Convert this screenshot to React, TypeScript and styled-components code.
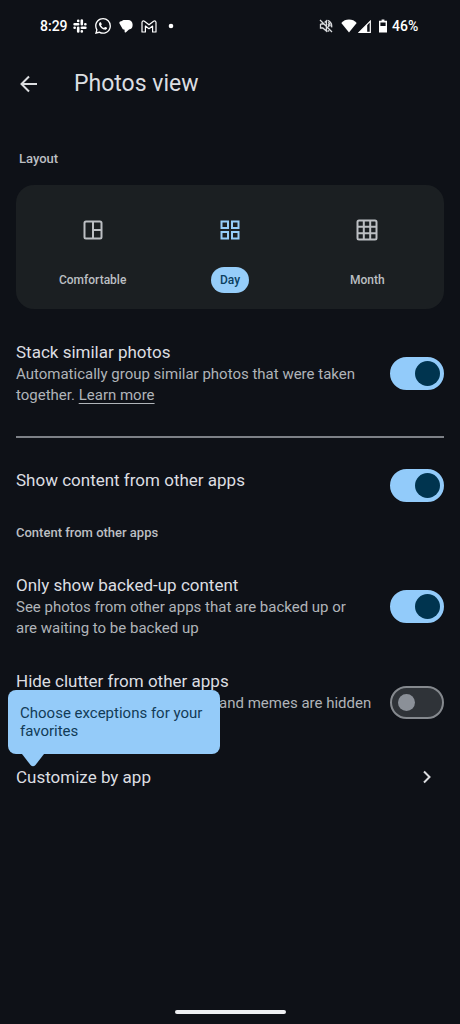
import React, { useState } from "react";
import styled, { createGlobalStyle } from "styled-components";

const GlobalStyle = createGlobalStyle`
  * { box-sizing: border-box; }
  body { margin: 0; background: #0e1117; }
  button, input { font: inherit; margin: 0; }
`;

const Screen = styled.div`
  min-height: 100vh;
  display: flex;
  flex-direction: column;
  background: #0e1117;
  color: #dcdee1;
  font-family: Roboto, "Liberation Sans", sans-serif;
`;

const StatusBar = styled.header`
  display: flex;
  align-items: center;
  justify-content: space-between;
  height: 52px;
  padding: 0 40px;
  font-size: 14px;
  font-weight: 500;
  color: #ffffff;
  svg { display: block; flex: none; }
`;

const StatusGroup = styled.div<{ $gap: number }>`
  display: flex;
  align-items: center;
  gap: ${(p) => p.$gap}px;
`;

const BatteryLevel = styled.span`
  min-width: 28px;
`;

const TopBar = styled.div`
  display: flex;
  align-items: center;
  gap: 32px;
  height: 64px;
  padding: 0 16px;
`;

const BackButton = styled.button`
  display: flex;
  width: 26px;
  height: 26px;
  padding: 0;
  border: 0;
  background: none;
  color: inherit;
`;

const PageTitle = styled.h1`
  margin: 0;
  font-size: 23px;
  line-height: 32px;
  font-weight: 400;
`;

const Content = styled.main`
  flex: 1;
  padding: 32px 16px 0;
`;

const SectionLabel = styled.h2<{ $inset?: boolean }>`
  margin: 0;
  padding: ${(p) => (p.$inset ? "2px 3px 17px" : "6px 0 16px")};
  font-size: 13px;
  line-height: 18px;
  font-weight: 500;
  color: #bcbfc3;
`;

const LayoutCard = styled.div`
  display: grid;
  grid-template-columns: 1fr 1fr 1fr;
  height: 124px;
  margin-bottom: 16px;
  padding: 0 8px;
  border-radius: 18px;
  background: #1b1f22;
  overflow: hidden;
`;

const LayoutOption = styled.button<{ $active: boolean }>`
  display: flex;
  flex-direction: column;
  align-items: center;
  gap: 24px;
  padding: 32px 0 0;
  border: 0;
  background: none;
  color: ${(p) => (p.$active ? "#96cdf9" : "#bcbfc3")};
`;

const OptionLabel = styled.span<{ $active: boolean }>`
  padding: 4px 9px;
  border-radius: 13px;
  font-size: 12px;
  line-height: 18px;
  font-weight: 500;
  background: ${(p) => (p.$active ? "#96cdf9" : "transparent")};
  color: ${(p) => (p.$active ? "#0b3f5f" : "#bcbfc3")};
`;

const Row = styled.div<{ $tall?: boolean; $top?: boolean }>`
  position: relative;
  display: flex;
  align-items: ${(p) => (p.$top ? "flex-start" : "center")};
  justify-content: space-between;
  gap: 16px;
  padding: ${(p) => (p.$tall ? "16px 0 15px" : "16px 0")};
`;

const RowCopy = styled.div<{ $tall?: boolean }>`
  flex: 1;
  min-height: ${(p) => (p.$tall ? "65px" : "22px")};
`;

const RowTitle = styled.label`
  display: block;
  font-size: 17px;
  line-height: 22px;
`;

const RowText = styled.p`
  margin: 1px 0 0;
  font-size: 15px;
  line-height: 21px;
  color: #b0b4b9;
`;

const TextLink = styled.a`
  color: inherit;
  text-decoration: underline;
  text-underline-offset: 3px;
`;

const Switch = styled.input`
  appearance: none;
  flex: none;
  display: flex;
  align-items: center;
  width: 54px;
  height: 33px;
  padding: 0 6px;
  border: 2px solid #85898e;
  border-radius: 17px;
  background: #2f3338;
  &::before {
    content: "";
    width: 17px;
    height: 17px;
    border-radius: 50%;
    background: #8b9098;
  }
  &:checked {
    justify-content: flex-end;
    padding: 0 2px;
    border-color: #92cbfa;
    background: #92cbfa;
  }
  &:checked::before {
    width: 25px;
    height: 25px;
    background: #00344f;
  }
`;

const Divider = styled.hr`
  height: 2px;
  margin: 15px 0;
  border: 0;
  background: #7d8187;
`;

const RowButton = styled.button`
  flex: 1;
  display: flex;
  align-items: center;
  justify-content: space-between;
  padding: 0 8px 0 0;
  border: 0;
  background: none;
  color: inherit;
  font-size: 17px;
  line-height: 22px;
  text-align: left;
`;

const Tooltip = styled.div`
  position: absolute;
  left: -8px;
  bottom: 50px;
  width: 212px;
  padding: 14px 12px;
  border-radius: 8px;
  background: #94cbf9;
  color: #123b57;
  font-size: 15px;
  line-height: 18px;
  svg {
    position: absolute;
    left: 14px;
    top: 100%;
  }
`;

const HomeBar = styled.footer`
  display: flex;
  justify-content: center;
  padding-bottom: 10px;
`;

const HomeHandle = styled.div`
  width: 111px;
  height: 4px;
  border-radius: 2px;
  background: #eef0f3;
`;

const SlackIcon = () => (
  <svg width="14" height="14" viewBox="0 0 14 14" fill="none" stroke="#fff" strokeWidth="2.6" strokeLinecap="round">
    <path d="M5.2 1.7v.2M5.2 5.2H1.6M8.8 1.6v3.6M12.3 5.2h.1M8.8 8.8h3.6M8.8 12.3v.1M5.2 8.8v3.6M1.7 8.8h-.1" />
  </svg>
);

const WhatsAppIcon = () => (
  <svg width="16" height="16" viewBox="0 0 24 24" fill="#fff">
    <path d="M17.47 14.38c-.3-.15-1.76-.87-2.03-.97-.27-.1-.47-.15-.67.15-.2.3-.77.97-.94 1.16-.17.2-.35.22-.64.08-.3-.15-1.26-.46-2.39-1.48-.88-.79-1.48-1.76-1.65-2.06-.17-.3-.02-.46.13-.6.13-.14.3-.35.45-.53.15-.17.2-.3.3-.5.1-.2.05-.37-.03-.52-.07-.15-.67-1.61-.91-2.2-.24-.58-.49-.5-.67-.51h-.57c-.2 0-.52.07-.79.37-.27.3-1.04 1.02-1.04 2.48s1.06 2.87 1.21 3.07c.15.2 2.1 3.2 5.08 4.49.7.3 1.26.49 1.69.62.71.23 1.36.2 1.87.12.57-.08 1.76-.72 2-1.41.25-.7.25-1.29.18-1.41-.07-.13-.27-.2-.57-.35M12.05 21.78a9.87 9.87 0 0 1-5.03-1.38l-.36-.21-3.74.98 1-3.65-.24-.37a9.86 9.86 0 0 1-1.51-5.26c0-5.45 4.44-9.88 9.89-9.88a9.82 9.82 0 0 1 6.99 2.9 9.82 9.82 0 0 1 2.89 6.99c0 5.45-4.44 9.88-9.89 9.88M20.46 3.49A11.8 11.8 0 0 0 12.05 0C5.5 0 .16 5.34.16 11.89c0 2.1.55 4.14 1.59 5.95L.06 24l6.3-1.65a11.9 11.9 0 0 0 5.69 1.45c6.55 0 11.89-5.34 11.89-11.89a11.82 11.82 0 0 0-3.48-8.42" />
  </svg>
);

const MessagesIcon = () => (
  <svg width="14" height="14" viewBox="0 0 14 14" fill="#fff">
    <path d="M4.8 1h4.4A4.400 4.400 0 0 1 13.600 5.400v.8A4.600 4.600 0 0 1 10 10.600L7 13.200Q5.600 14 5.600 12.400V10.800A3.400 3.400 0 0 1 2.800 8.400L.5 4.600Q-.2 2.600 2 2.200L3 2Q3.800 1 4.800 1Z" />
  </svg>
);

const MailIcon = () => (
  <svg width="16" height="13" viewBox="0 0 16 13" fill="none" stroke="#fff" strokeWidth="1.2" strokeLinejoin="round">
    <path d="M1 2.400Q1.400.3 3.400 1.200L8 4.800l4.600-3.600Q14.600.3 15 2.400V12h-3.400V6L8 8.700 4.400 6v6H1Z" />
  </svg>
);

const MutedIcon = () => (
  <svg width="14" height="14" viewBox="0 0 14 14" fill="none" stroke="#d9dbde" strokeWidth="1.3">
    <path d="M1 1l12 12M1.500 5v4h2.300L7.400 12V2L5.600 3.600M1.500 5h3.200M9 5q1.200 1.800.4 3M8.600 1.400q4.800 1.800 4 7M9.200 3.400q2.200 1.200 1.800 4M8.400 12.400l1.800-.8" />
  </svg>
);

const WifiIcon = () => (
  <svg width="16" height="14" viewBox="0 0 16 14" fill="#fff">
    <path d="M8 13.600.3 4Q3.400.6 8 .6T15.700 4Z" />
  </svg>
);

const SignalIcon = () => (
  <svg width="13" height="13" viewBox="0 0 13 13">
    <path d="M12.300 1.200V12.300H1.400Z" fill="none" stroke="#fff" strokeWidth="1.200" />
    <path d="M1 12.600 9.200 4.200V12.600Z" fill="#fff" />
  </svg>
);

const BatteryIcon = () => (
  <svg width="8" height="14" viewBox="0 0 8 14">
    <path d="M2.600.4h2.800v1.400H8V13.600H0V1.800h2.600ZM1.400 3.400V7h5.200V3.400Z" fill="#fff" fillRule="evenodd" />
  </svg>
);

const BackArrow = () => (
  <svg width="26" height="26" viewBox="0 0 26 26" fill="none" stroke="currentColor" strokeWidth="2">
    <path d="M21 13H6M13 5.500 5.500 13l7.500 7.500" />
  </svg>
);

const MosaicIcon = () => (
  <svg width="26" height="26" viewBox="0 0 26 26" fill="none" stroke="currentColor" strokeWidth="2">
    <rect x="4.500" y="4.500" width="17" height="17" rx="1.500" />
    <path d="M13 4.500v17M13 13h8.500" />
  </svg>
);

const FourGridIcon = () => (
  <svg width="26" height="26" viewBox="0 0 26 26" fill="none" stroke="currentColor" strokeWidth="2">
    <path d="M4.500 4.500h6.500v6.500h-6.500ZM15 4.500h6.500v6.500H15ZM4.500 15h6.500v6.500h-6.500ZM15 15h6.500v6.500H15Z" />
  </svg>
);

const NineGridIcon = () => (
  <svg width="26" height="26" viewBox="0 0 26 26" fill="none" stroke="currentColor" strokeWidth="2">
    <rect x="3.500" y="3.500" width="19" height="19" rx="1.500" />
    <path d="M9.800 3.500v19M16.200 3.500v19M3.500 9.800h19M3.500 16.200h19" />
  </svg>
);

const Chevron = () => (
  <svg width="18" height="18" viewBox="0 0 18 18" fill="none" stroke="currentColor" strokeWidth="2">
    <path d="m6 3.500 5.500 5.500L6 14.500" />
  </svg>
);

const layouts = [
  { name: "Comfortable", Icon: MosaicIcon },
  { name: "Day", Icon: FourGridIcon },
  { name: "Month", Icon: NineGridIcon },
];

interface SettingProps {
  id: string;
  title: string;
  on?: boolean;
  children?: React.ReactNode;
}

const Setting = ({ id, title, on = false, children }: SettingProps) => (
  <Row $top={!children} $tall={!!children}>
    <RowCopy $tall={!!children}>
      <RowTitle htmlFor={id}>{title}</RowTitle>
      {children && <RowText>{children}</RowText>}
    </RowCopy>
    <Switch id={id} type="checkbox" role="switch" defaultChecked={on} />
  </Row>
);

export default function App() {
  const [layout, setLayout] = useState("Day");
  return (
    <Screen>
      <GlobalStyle />
      <StatusBar>
        <StatusGroup $gap={8}>
          <StatusGroup $gap={5}>
            <span>8:29</span>
            <SlackIcon />
          </StatusGroup>
          <WhatsAppIcon />
          <MessagesIcon />
          <MailIcon />
          <svg width="20" height="6" viewBox="0 0 20 6" fill="#fff">
            <circle cx="6" cy="3" r="2.300" />
          </svg>
        </StatusGroup>
        <StatusGroup $gap={8}>
          <MutedIcon />
          <StatusGroup $gap={1}>
            <WifiIcon />
            <SignalIcon />
          </StatusGroup>
          <StatusGroup $gap={5}>
            <BatteryIcon />
            <BatteryLevel>46%</BatteryLevel>
          </StatusGroup>
        </StatusGroup>
      </StatusBar>
      <TopBar>
        <BackButton aria-label="Back">
          <BackArrow />
        </BackButton>
        <PageTitle>Photos view</PageTitle>
      </TopBar>
      <Content>
        <SectionLabel $inset>Layout</SectionLabel>
        <LayoutCard>
          {layouts.map(({ name, Icon }) => (
            <LayoutOption
              key={name}
              $active={layout === name}
              aria-pressed={layout === name}
              onClick={() => setLayout(name)}
            >
              <Icon />
              <OptionLabel $active={layout === name}>{name}</OptionLabel>
            </LayoutOption>
          ))}
        </LayoutCard>
        <Setting id="stack" title="Stack similar photos" on>
          Automatically group similar photos that were taken together.{" "}
          <TextLink href="#learn-more">Learn more</TextLink>
        </Setting>
        <Divider />
        <Setting id="other-apps" title="Show content from other apps" on />
        <SectionLabel>Content from other apps</SectionLabel>
        <Setting id="backed-up" title="Only show backed-up content" on>
          See photos from other apps that are backed up or are&nbsp;waiting to be backed up
        </Setting>
        <Setting id="clutter" title="Hide clutter from other apps">
          Photos like screenshots, GIFs, and memes are hidden
        </Setting>
        <Row>
          <RowButton>
            Customize by app
            <Chevron />
          </RowButton>
          <Tooltip role="tooltip">
            Choose exceptions for your favorites
            <svg width="22" height="13" viewBox="0 0 22 13" fill="#94cbf9">
              <path d="M0 0h22l-8.500 11q-2.500 2.500-5 0Z" />
            </svg>
          </Tooltip>
        </Row>
      </Content>
      <HomeBar>
        <HomeHandle />
      </HomeBar>
    </Screen>
  );
}
